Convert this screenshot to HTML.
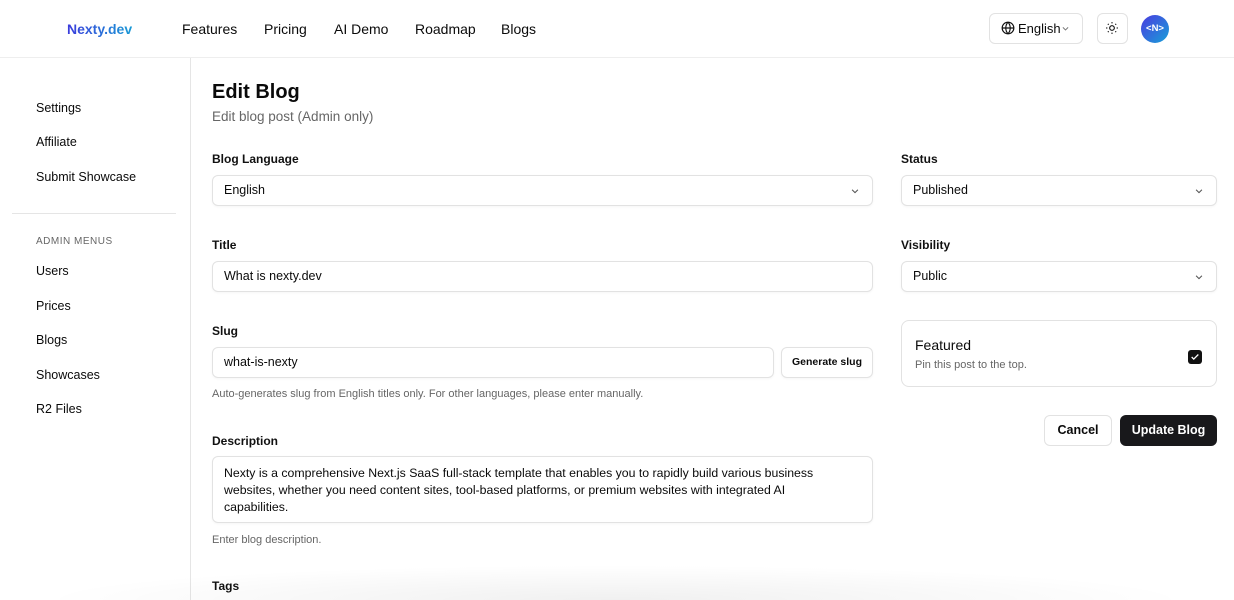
<!DOCTYPE html>
<html><head><meta charset="utf-8"><style>
*{box-sizing:border-box;margin:0;padding:0}
html,body{width:1234px;height:600px;overflow:hidden}
body{background:#fff;font-family:"Liberation Sans",sans-serif;color:#0a0a0a;position:relative}
.hdr{position:absolute;left:0;top:0;width:1234px;height:58px;border-bottom:1px solid #eee}
.abs{position:absolute;white-space:nowrap}
.nav{font-size:14px;top:21px}
.side{position:absolute;left:0;top:58px;width:191px;height:542px;border-right:1px solid #e5e5e5}
.si{position:absolute;left:36px;font-size:12.5px}
.lbl{position:absolute;font-size:12px;font-weight:bold;color:#111}
.inp{position:absolute;height:31px;border:1px solid #e2e2e2;border-radius:6px;font-size:12.5px;padding:0 11px;line-height:29px;box-shadow:0 1px 2px rgba(0,0,0,.04)}
.help{position:absolute;font-size:11px;color:#666}
.chev{position:absolute;right:12px;top:10px}
</style></head><body>
<div class="hdr">
<div class="abs" style="left:67px;top:21px;font-size:14px;font-weight:bold;background:linear-gradient(90deg,#3b3bdc,#1a9ad6);-webkit-background-clip:text;color:transparent">Nexty.dev</div>
<div class="abs nav" style="left:182px">Features</div>
<div class="abs nav" style="left:264px">Pricing</div>
<div class="abs nav" style="left:334px">AI Demo</div>
<div class="abs nav" style="left:415px">Roadmap</div>
<div class="abs nav" style="left:501px">Blogs</div>
<div class="abs" style="left:989px;top:13px;width:94px;height:31px;border:1px solid #e2e2e2;border-radius:6px;font-size:13px;line-height:29px;padding-left:28px">English</div>
<svg class="abs" style="left:1001px;top:21px" width="14" height="14" viewBox="0 0 24 24" fill="none" stroke="#111" stroke-width="2"><circle cx="12" cy="12" r="10"/><path d="M2 12h20M12 2a15 15 0 0 1 0 20M12 2a15 15 0 0 0 0 20"/></svg>
<svg class="abs" style="left:1061px;top:24px" width="9" height="9" viewBox="0 0 24 24" fill="none" stroke="#777" stroke-width="2.5"><path d="M5 9l7 7 7-7"/></svg>
<div class="abs" style="left:1097px;top:13px;width:31px;height:31px;border:1px solid #e2e2e2;border-radius:6px"></div>
<svg class="abs" style="left:1105px;top:21px" width="14" height="14" viewBox="0 0 24 24" fill="none" stroke="#111" stroke-width="2"><circle cx="12" cy="12" r="4"/><path d="M12 2v2M12 20v2M4.9 4.9l1.4 1.4M17.7 17.7l1.4 1.4M2 12h2M20 12h2M4.9 19.1l1.4-1.4M17.7 6.3l1.4-1.4"/></svg>
<div class="abs" style="left:1141px;top:15px;width:28px;height:28px;border-radius:50%;background:linear-gradient(135deg,#4a3be0,#18a0d8);color:#fff;font-size:9.5px;font-weight:bold;text-align:center;line-height:28px">&lt;N&gt;</div>
</div>
<div class="side">
<div class="si" style="top:43px">Settings</div>
<div class="si" style="top:77px">Affiliate</div>
<div class="si" style="top:112px">Submit Showcase</div>
<div style="position:absolute;left:12px;top:155px;width:164px;height:1px;background:#e5e5e5"></div>
<div class="si" style="top:178px;font-size:10px;color:#666;letter-spacing:.5px">ADMIN MENUS</div>
<div class="si" style="top:206px">Users</div>
<div class="si" style="top:241px">Prices</div>
<div class="si" style="top:275px">Blogs</div>
<div class="si" style="top:310px">Showcases</div>
<div class="si" style="top:344px">R2 Files</div>
</div>
<div class="abs" style="left:212px;top:81px;font-size:20px;font-weight:bold">Edit Blog</div>
<div class="abs" style="left:212px;top:109px;font-size:13.5px;color:#666">Edit blog post (Admin only)</div>

<div class="lbl" style="left:212px;top:152px">Blog Language</div>
<div class="inp" style="left:212px;top:175px;width:661px">English<svg class="chev" width="10" height="10" viewBox="0 0 24 24" fill="none" stroke="#555" stroke-width="2.5"><path d="M5 9l7 7 7-7"/></svg></div>
<div class="lbl" style="left:212px;top:238px">Title</div>
<div class="inp" style="left:212px;top:261px;width:661px">What is nexty.dev</div>
<div class="lbl" style="left:212px;top:324px">Slug</div>
<div class="inp" style="left:212px;top:347px;width:562px">what-is-nexty</div>
<div class="inp" style="left:781px;top:347px;width:92px;font-size:10.5px;font-weight:bold;text-align:center;padding:0">Generate slug</div>
<div class="help" style="left:212px;top:388px">Auto-generates slug from English titles only. For other languages, please enter manually.</div>
<div class="lbl" style="left:212px;top:434px">Description</div>
<div class="inp" style="left:212px;top:456px;width:661px;height:67px;line-height:17px;padding:8px 40px 8px 11px;white-space:normal;font-size:12.3px">Nexty is a comprehensive Next.js SaaS full-stack template that enables you to rapidly build various business websites, whether you need content sites, tool-based platforms, or premium websites with integrated AI capabilities.</div>
<div class="help" style="left:212px;top:534px">Enter blog description.</div>
<div class="lbl" style="left:212px;top:579px">Tags</div>

<div class="lbl" style="left:901px;top:152px">Status</div>
<div class="inp" style="left:901px;top:175px;width:316px">Published<svg class="chev" width="10" height="10" viewBox="0 0 24 24" fill="none" stroke="#555" stroke-width="2.5"><path d="M5 9l7 7 7-7"/></svg></div>
<div class="lbl" style="left:901px;top:238px">Visibility</div>
<div class="inp" style="left:901px;top:261px;width:316px">Public<svg class="chev" width="10" height="10" viewBox="0 0 24 24" fill="none" stroke="#555" stroke-width="2.5"><path d="M5 9l7 7 7-7"/></svg></div>
<div class="abs" style="left:901px;top:320px;width:316px;height:67px;border:1px solid #e2e2e2;border-radius:8px"></div>
<div class="abs" style="left:915px;top:337px;font-size:14px">Featured</div>
<div class="abs" style="left:915px;top:359px;font-size:11px;color:#666">Pin this post to the top.</div>
<div class="abs" style="left:1188px;top:350px;width:14px;height:14px;background:#111;border-radius:3px"></div>
<svg class="abs" style="left:1190px;top:352px" width="10" height="10" viewBox="0 0 24 24" fill="none" stroke="#fff" stroke-width="3"><path d="M4 12l5 5L20 6"/></svg>
<div class="abs" style="left:1044px;top:415px;width:68px;height:31px;border:1px solid #e2e2e2;border-radius:6px;font-size:12.5px;font-weight:bold;text-align:center;line-height:29px">Cancel</div>
<div class="abs" style="left:1120px;top:415px;width:97px;height:31px;background:#18181b;border-radius:6px;color:#fff;font-size:12.5px;font-weight:bold;text-align:center;line-height:31px">Update Blog</div>
<div style="position:absolute;left:40px;top:565px;width:1150px;height:35px;background:radial-gradient(ellipse 50% 100% at 50% 100%,rgba(0,0,0,.06),rgba(0,0,0,0));pointer-events:none"></div>
</body></html>
